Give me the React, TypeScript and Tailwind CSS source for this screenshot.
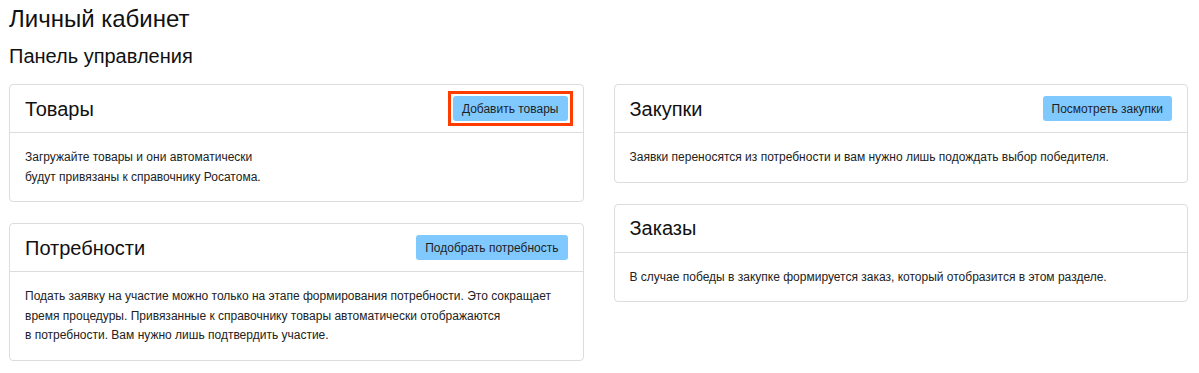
import React from 'react';

type CardProps = {
    title: string;
    action?: string;
    highlighted?: boolean;
    children: React.ReactNode;
};

function ActionButton({ label }: { label: string }) {
    return (
        <button
            type="button"
            className="h-[25px] px-[9px] rounded-[3px] bg-[#80c9ff] text-[12px] text-[#1f1f1f]"
        >
            {label}
        </button>
    );
}

function Card({ title, action, highlighted, children }: CardProps) {
    return (
        <div className="bg-white border border-[#dddddd] rounded-[4px] mb-[21px]">
            <div className="h-[48px] px-[15px] flex items-center justify-between border-b border-[#dddddd]">
                <h3 className="text-[20px] leading-[24px] text-[#111111]">{title}</h3>
                {action &&
                    (highlighted ? (
                        // highlight frame around the button (square corners)
                        <span className="flex -m-[5px] p-[2px] border-[3px] border-[#ff3d00] bg-white">
                            <ActionButton label={action} />
                        </span>
                    ) : (
                        <ActionButton label={action} />
                    ))}
            </div>
            <div className="px-[15px] pt-[15px] pb-[14px] text-[12px] leading-[19.5px] text-[#222222]">
                {children}
            </div>
        </div>
    );
}

export default function App() {
    return (
        <div className="min-h-screen bg-white font-['Liberation_Sans',Arial,sans-serif] pl-[9px] pr-[11px] pt-[5px]">
            <h1 className="text-[24px] leading-[28px] text-[#111111]">Личный кабинет</h1>
            <h2 className="mt-[11px] text-[20px] leading-[24px] text-[#111111]">Панель управления</h2>

            <div className="mt-[16px] grid grid-cols-2 gap-x-[30px]">
                {/* Left column */}
                <div>
                    <Card title="Товары" action="Добавить товары" highlighted>
                        Загружайте товары и они автоматически
                        <br />
                        будут привязаны к справочнику Росатома.
                    </Card>
                    <Card title="Потребности" action="Подобрать потребность">
                        Подать заявку на участие можно только на этапе формирования потребности. Это сокращает
                        <br />
                        время процедуры. Привязанные к справочнику товары автоматически отображаются
                        <br />
                        в потребности. Вам нужно лишь подтвердить участие.
                    </Card>
                </div>

                {/* Right column */}
                <div>
                    <Card title="Закупки" action="Посмотреть закупки">
                        Заявки переносятся из потребности и вам нужно лишь подождать выбор победителя.
                    </Card>
                    <Card title="Заказы">
                        В случае победы в закупке формируется заказ, который отобразится в этом разделе.
                    </Card>
                </div>
            </div>
        </div>
    );
}
